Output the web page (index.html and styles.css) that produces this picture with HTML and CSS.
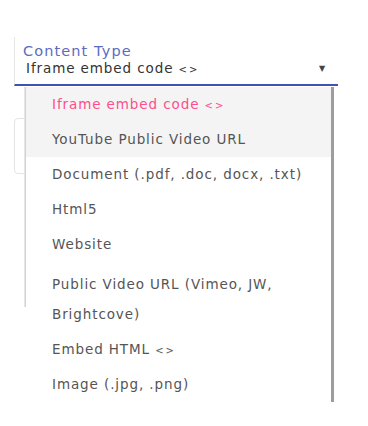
FILE: index.html
```html
<!DOCTYPE html>
<html lang="en">
<head>
    <meta charset="UTF-8">
    <meta name="viewport" content="width=device-width, initial-scale=1.0">
    <title>Content Type</title>
    <link rel="stylesheet" href="styles.css">
</head>
<body>
    <!-- Select field -->
    <div class="select-field">
        <div class="select-label">Content Type</div>
        <div class="select-value">
            <span>Iframe embed code <span class="code-mark">&lt;&gt;</span></span>
            <span class="select-arrow">&#9660;</span>
        </div>
    </div>

    <!-- Dropdown over the form -->
    <div class="stage">
        <div class="behind-card"><span class="behind-letter"></span></div>
        <ul class="options">
            <li class="option selected">Iframe embed code <span class="code-mark">&lt;&gt;</span></li>
            <li class="option hovered">YouTube Public Video URL</li>
            <li class="option">Document (.pdf, .doc, docx, .txt)</li>
            <li class="option">Html5</li>
            <li class="option">Website</li>
            <li class="option multi">Public Video URL (Vimeo, JW, Brightcove)</li>
            <li class="option">Embed HTML <span class="code-mark">&lt;&gt;</span></li>
            <li class="option">Image (.jpg, .png)</li>
        </ul>
    </div>
</body>
</html>
```

FILE: styles.css
```css
/* General body styling */
body {
    font-family: "DejaVu Sans", Arial, sans-serif;
    margin: 0;
    padding: 0;
    background-color: #fff;
    color: #333;
}

/* Select field */
.select-field {
    margin: 37px 0 0 14px;
    width: 315px;
    padding: 5px 0 6px 8px;
    border-left: 1px solid #e6e6e6;
    border-bottom: 2px solid #3f51b5;
}

.select-label {
    font-size: 14.5px;
    line-height: 18px;
    letter-spacing: 1.1px;
    color: #5c6bc0;
}

.select-value {
    display: flex;
    justify-content: space-between;
    align-items: center;
    font-size: 13.5px;
    line-height: 16px;
    letter-spacing: 0.9px;
    padding: 0 12px 0 3px;
    color: #333;
}

.select-arrow {
    font-size: 8px;
    color: #444;
}

.code-mark {
    font-size: 10px;
    letter-spacing: 2px;
}

/* Dropdown list */
.stage {
    position: relative;
}

.behind-card {
    position: absolute;
    left: 14px;
    top: 31px;
    width: 30px;
    height: 54px;
    border: 1px solid #e4e4e4;
    border-radius: 4px;
}

.behind-letter {
    position: absolute;
    left: 9px;
    top: 10px;
    width: 2px;
    height: 12px;
    background-color: #6b5a4a;
}

.options {
    position: relative;
    list-style: none;
    margin: 1px 0 0 26px;
    padding: 0;
    width: 305px;
    background-color: #fff;
    border-right: 3px solid #9d9d9d;
}

.options::before {
    content: "";
    position: absolute;
    left: -2px;
    top: 0;
    width: 2px;
    height: 220px;
    background: linear-gradient(to right, #f0f0f0, #c9c9c9);
}

.option {
    height: 35px;
    line-height: 35px;
    padding-left: 26px;
    font-size: 13.5px;
    letter-spacing: 0.9px;
    color: #555;
}

.option.selected {
    background-color: #f4f4f4;
    color: #ff4d8d;
}

.option.hovered {
    background-color: #f4f4f4;
}

.option.multi {
    height: auto;
    line-height: 30px;
    padding: 7px 20px 3px 26px;
}
```
